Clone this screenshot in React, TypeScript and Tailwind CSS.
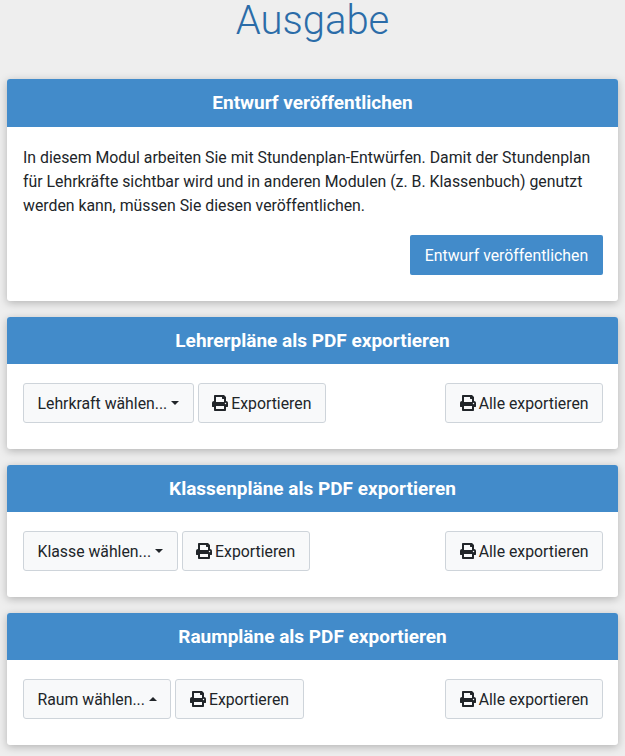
import { FaPrint } from "react-icons/fa";

function Caret({ up }: { up?: boolean }) {
  return (
    <span
      className={
        up
          ? "ml-[4px] mb-[2px] inline-block border-x-[4px] border-x-transparent border-b-[4px] border-b-[#212529]"
          : "ml-[4px] mb-[2px] inline-block border-x-[4px] border-x-transparent border-t-[4px] border-t-[#212529]"
      }
    />
  );
}

const btn =
  "h-[40px] rounded-[3px] border border-[#ced4da] bg-[#f8f9fa] px-[13.5px] pt-[1px] text-[15.8px] leading-[24px] text-[#212529] flex items-center whitespace-nowrap";

function ExportCard({ title, label, up }: { title: string; label: string; up?: boolean }) {
  return (
    <section className="mb-[16px] rounded-[3px] bg-white shadow-[0_2px_8px_rgba(0,0,0,0.25)] overflow-hidden">
      <h2 className="h-[47px] bg-[#428bca] text-center text-[19px] font-bold leading-[47px] text-white">{title}</h2>
      <div className="flex items-center justify-between pl-[16px] pr-[15px] pt-[19px] pb-[26px]">
        <div className="flex gap-[4px]">
          <button className={btn}>
            {label}
            <Caret up={up} />
          </button>
          <button className={btn}>
            <FaPrint className="mb-[1px] mr-[3px] h-[16px] w-[16px]" />
            Exportieren
          </button>
        </div>
        <button className={btn}>
          <FaPrint className="mb-[1px] mr-[3px] h-[16px] w-[16px]" />
          Alle exportieren
        </button>
      </div>
    </section>
  );
}

export default function App() {
  return (
    <div className="min-h-[756px] overflow-hidden bg-[#eeeeee] px-[7px] font-['Roboto',sans-serif]">
      <h1 className="h-[79px] text-center text-[40px] font-light leading-[42px] text-[#2b6ca8]">Ausgabe</h1>
      <section className="mb-[16px] rounded-[3px] bg-white shadow-[0_2px_8px_rgba(0,0,0,0.25)] overflow-hidden">
        <h2 className="h-[48px] bg-[#428bca] text-center text-[19px] font-bold leading-[48px] text-white">Entwurf veröffentlichen</h2>
        <div className="pl-[16px] pr-[15px] pt-[19px] pb-[26px]">
          <p className="text-[15.84px] leading-[24px] text-[#212529]">
            In diesem Modul arbeiten Sie mit Stundenplan-Entwürfen. Damit der Stundenplan für Lehrkräfte sichtbar wird und in anderen Modulen (z. B. Klassenbuch) genutzt werden kann, müssen Sie diesen veröffentlichen.
          </p>
          <div className="mt-[17px] flex justify-end">
            <button className="h-[40px] w-[193px] rounded-[2px] bg-[#428bca] pt-[1px] text-[15.8px] text-white">Entwurf veröffentlichen</button>
          </div>
        </div>
      </section>
      <ExportCard title="Lehrerpläne als PDF exportieren" label="Lehrkraft wählen..." />
      <ExportCard title="Klassenpläne als PDF exportieren" label="Klasse wählen..." />
      <ExportCard title="Raumpläne als PDF exportieren" label="Raum wählen..." up />
    </div>
  );
}
